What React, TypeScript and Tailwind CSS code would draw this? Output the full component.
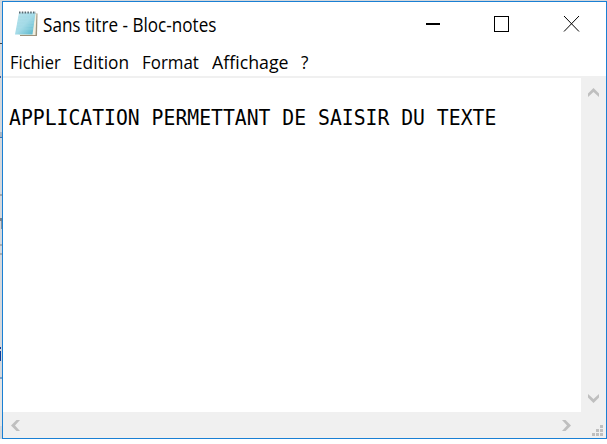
import React from "react";

const sans = "font-['Open_Sans','Noto_Sans',sans-serif]";

// Label whose glyphs are condensed to a fixed advance width
function Label({ text, box, scale }: { text: string; box: string; scale: string }) {
  return (
    <span className={`block shrink-0 whitespace-pre ${box}`}>
      <span className={`inline-block origin-left ${scale}`}>{text}</span>
    </span>
  );
}

function NotepadIcon() {
  return (
    <svg className="block" width="25" height="27" viewBox="0 0 25 27">
      <defs>
        <linearGradient id="page" x1="0" y1="0" x2="1" y2="1">
          <stop offset="0" stopColor="#b9e3ec" />
          <stop offset="0.5" stopColor="#a5dbe8" />
          <stop offset="1" stopColor="#4fb2c8" />
        </linearGradient>
      </defs>
      <path d="M6 3.5H23.5L23 26H6Z" fill="#9c927c" />
      <path d="M7 3.5H22.5L21.5 25H5Z" fill="#f3efdf" />
      <path d="M5 2.5H21.5L18.5 24.5H1Z" fill="url(#page)" />
      <path d="M4.5 7H21M4 10H20.5M3.5 13H20M3 16H19.5M2.5 19H19" stroke="#a2d8e3" strokeWidth="0.5" />
      <path d="M5 2.5H22" stroke="#596870" strokeWidth="2" strokeDasharray="1.5 1.3" />
    </svg>
  );
}

export default function App() {
  return (
    <div className="h-[444px] w-[607px] overflow-hidden bg-white">
      <div className="flex h-[439px] bg-[#d5d8dc] pt-px">
        <div className="flex w-[2px] shrink-0 flex-col">
          <div className="h-[42px] bg-[#d5d8dc]" />
          <div className="h-px bg-[#444444]" />
          <div className="h-[32px]" />
          <div className="h-[2px] w-px bg-[#3c62a0]" />
          <div className="h-[54px]" />
          <div className="h-[5px] bg-[#a9b5c2]" />
          <div className="h-px bg-[#3474b8]" />
          <div className="h-[56px]" />
          <div className="h-[2px] bg-[#a6a6a6]" />
          <div className="h-[22px]" />
          <div className="h-[3px] bg-[#77808a]" />
          <div className="ml-px h-[8px] bg-[#8794a0]" />
          <div className="h-[15px]" />
          <div className="h-[2px] bg-[#acacac]" />
          <div className="h-[7px]" />
          <div className="h-[2px] bg-[#acacac]" />
          <div className="h-[92px]" />
          <div className="h-[2px] w-px bg-[#0a3c9c]" />
          <div className="h-[2px]" />
          <div className="h-[10px] w-px bg-[#0a3c9c]" />
          <div className="h-[16px]" />
          <div className="h-[2px] bg-[#7aa0c8]" />
          <div className="h-[47px] bg-[#e4e4e4]" />
        </div>
        <div className={`flex w-[605px] shrink-0 flex-col border border-[#1a80d4] bg-white text-black ${sans}`}>
          <header className="flex h-[45px] shrink-0 pl-[11px]">
            <div className="w-[29px] shrink-0 pt-[8px]"><NotepadIcon /></div>
            <div className="w-[380px] pt-[10px] text-[19.5px] font-[370] leading-[26px]">
              <Label text="Sans titre - Bloc-notes" box="w-[180px]" scale="scale-x-[0.877]" />
            </div>
            <svg className="block" width="160" height="45" viewBox="0 0 160 45" fill="none" stroke="#000" shapeRendering="crispEdges">
              <path d="M3 22H17" strokeWidth="2" />
              <rect x="71.5" y="14.5" width="14" height="15" />
              <path d="M141 14L156 29.5M156 14L141 29.5" shapeRendering="auto" />
            </svg>
          </header>
          <nav className="flex h-[29px] shrink-0 pl-[7px] pt-[2px] text-[19px] font-[370] leading-[26px]">
            <Label text="Fichier" box="w-[63px]" scale="scale-x-[0.865]" />
            <Label text="Edition" box="w-[69px]" scale="scale-x-[0.91]" />
            <Label text="Format" box="w-[70px]" scale="scale-x-[0.89]" />
            <Label text="Affichage" box="w-[89px]" scale="scale-x-[0.935]" />
            <Label text="?" box="w-[10px]" scale="scale-x-[0.9]" />
          </nav>
          <div className="h-[2px] shrink-0 bg-[#f0f0f0]" />
          <div className="flex h-[334px] shrink-0">
            <main className="w-[578px] pl-[6px] pt-[28px] font-['DejaVu_Sans_Mono',monospace] text-[20.5px] leading-[25px]">
              <p className="origin-left scale-x-[0.963] whitespace-pre">APPLICATION PERMETTANT DE SAISIR DU TEXTE</p>
            </main>
            <aside className="flex w-[25px] flex-col items-center justify-between bg-[#f0f0f0] pb-[9px] pt-[10px]">
              <svg className="block" width="11" height="10" viewBox="0 0 11 10" fill="#bfbfbf"><path d="M5.5 0L11 5.5V9L5.5 4L0 9V5.5Z" /></svg>
              <svg className="block" width="11" height="10" viewBox="0 0 11 10" fill="#bfbfbf"><path d="M5.5 10L11 4.5V1L5.5 6L0 1V4.5Z" /></svg>
            </aside>
          </div>
          <footer className="flex h-[26px] shrink-0 bg-[#f0f0f0] pl-[8px]">
            <svg className="mt-[8px] block" width="10" height="11" viewBox="0 0 10 11" fill="#bfbfbf"><path d="M0 5.5L5.5 0H9L4 5.5L9 11H5.5Z" /></svg>
            <svg className="ml-[540px] mt-[8px] block" width="10" height="11" viewBox="0 0 10 11" fill="#bfbfbf"><path d="M10 5.5L4.5 0H1L6 5.5L1 11H4.5Z" /></svg>
            <svg className="ml-[21px] mt-[13px] block" width="11" height="11" viewBox="0 0 11 11" fill="#bfbfbf"><path d="M8 0h3v3h-3zM4 4h3v3h-3zM8 4h3v3h-3zM0 8h3v3h-3zM4 8h3v3h-3zM8 8h3v3h-3z" /></svg>
          </footer>
        </div>
      </div>
    </div>
  );
}
